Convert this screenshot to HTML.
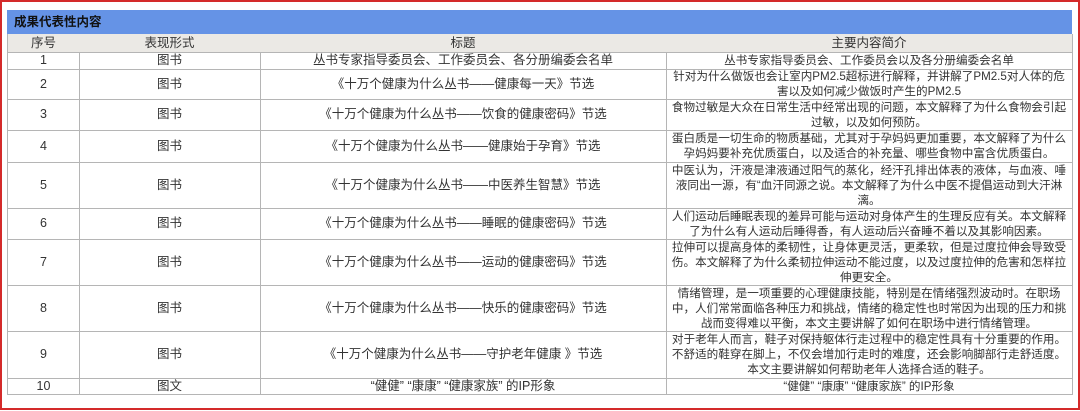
<!DOCTYPE html>
<html><head><meta charset="utf-8"><style>
*{margin:0;padding:0;box-sizing:border-box}
body{width:1080px;height:411px;background:#fff;position:relative;overflow:hidden;font-family:"Liberation Sans","Noto Sans CJK SC",sans-serif;color:#333;font-size:12.5px}
.frame{position:absolute;left:0;top:0;width:1080px;height:410px;border:2px solid #d42a2a}
.bar{position:absolute;left:7px;top:10px;width:1065px;height:24px;background:#6593e6;color:#111;font-weight:bold;font-size:12.5px;line-height:24px;padding-left:7px}
.c{position:absolute;display:flex;align-items:center;justify-content:center;text-align:center;line-height:15px;white-space:nowrap;border-right:1px solid #b5b5b5;border-bottom:1px solid #b5b5b5;overflow:hidden}
.r{font-size:11.6px}
.h{background:#ebe9e5;font-size:12.5px}
.l{border-left:1px solid #b5b5b5}
</style></head><body>
<div class="frame"></div>
<div class="bar">成果代表性内容</div>
<div id="t"></div>
<script>
var cols=[7,79,260,666,1072];
var rows=[34,52,69,99,130,162,208,239,285,331,378,394];
var data=[
["序号","表现形式","标题","主要内容简介"],
["1","图书","丛书专家指导委员会、工作委员会、各分册编委会名单","丛书专家指导委员会、工作委员会以及各分册编委会名单"],
["2","图书","《十万个健康为什么丛书——健康每一天》节选","针对为什么做饭也会让室内PM2.5超标进行解释，并讲解了PM2.5对人体的危<br>害以及如何减少做饭时产生的PM2.5"],
["3","图书","《十万个健康为什么丛书——饮食的健康密码》节选","食物过敏是大众在日常生活中经常出现的问题，本文解释了为什么食物会引起<br>过敏，以及如何预防。"],
["4","图书","《十万个健康为什么丛书——健康始于孕育》节选","蛋白质是一切生命的物质基础，尤其对于孕妈妈更加重要，本文解释了为什么<br>孕妈妈要补充优质蛋白，以及适合的补充量、哪些食物中富含优质蛋白。"],
["5","图书","《十万个健康为什么丛书——中医养生智慧》节选","中医认为，汗液是津液通过阳气的蒸化，经汗孔排出体表的液体，与血液、唾<br>液同出一源，有“血汗同源之说。本文解释了为什么中医不提倡运动到大汗淋<br>漓。"],
["6","图书","《十万个健康为什么丛书——睡眠的健康密码》节选","人们运动后睡眠表现的差异可能与运动对身体产生的生理反应有关。本文解释<br>了为什么有人运动后睡得香，有人运动后兴奋睡不着以及其影响因素。"],
["7","图书","《十万个健康为什么丛书——运动的健康密码》节选","拉伸可以提高身体的柔韧性，让身体更灵活，更柔软，但是过度拉伸会导致受<br>伤。本文解释了为什么柔韧拉伸运动不能过度，以及过度拉伸的危害和怎样拉<br>伸更安全。"],
["8","图书","《十万个健康为什么丛书——快乐的健康密码》节选","情绪管理，是一项重要的心理健康技能，特别是在情绪强烈波动时。在职场<br>中，人们常常面临各种压力和挑战，情绪的稳定性也时常因为出现的压力和挑<br>战而变得难以平衡，本文主要讲解了如何在职场中进行情绪管理。"],
["9","图书","《十万个健康为什么丛书——守护老年健康 》节选","对于老年人而言，鞋子对保持躯体行走过程中的稳定性具有十分重要的作用。<br>不舒适的鞋穿在脚上，不仅会增加行走时的难度，还会影响脚部行走舒适度。<br>本文主要讲解如何帮助老年人选择合适的鞋子。"],
["10","图文","“健健” “康康” “健康家族” 的IP形象","“健健” “康康” “健康家族” 的IP形象"]
];
var h="";
for(var r=0;r<data.length;r++){for(var c=0;c<4;c++){
var cls="c"+(r==0?" h":"")+(c==0?" l":"")+(c==3?" r":"");
h+='<div class="'+cls+'" style="left:'+cols[c]+'px;top:'+rows[r]+'px;width:'+(cols[c+1]-cols[c]+1)+'px;height:'+(rows[r+1]-rows[r]+1)+'px">'+data[r][c]+'</div>';}}
document.getElementById("t").innerHTML=h;
</script>
</body></html>
